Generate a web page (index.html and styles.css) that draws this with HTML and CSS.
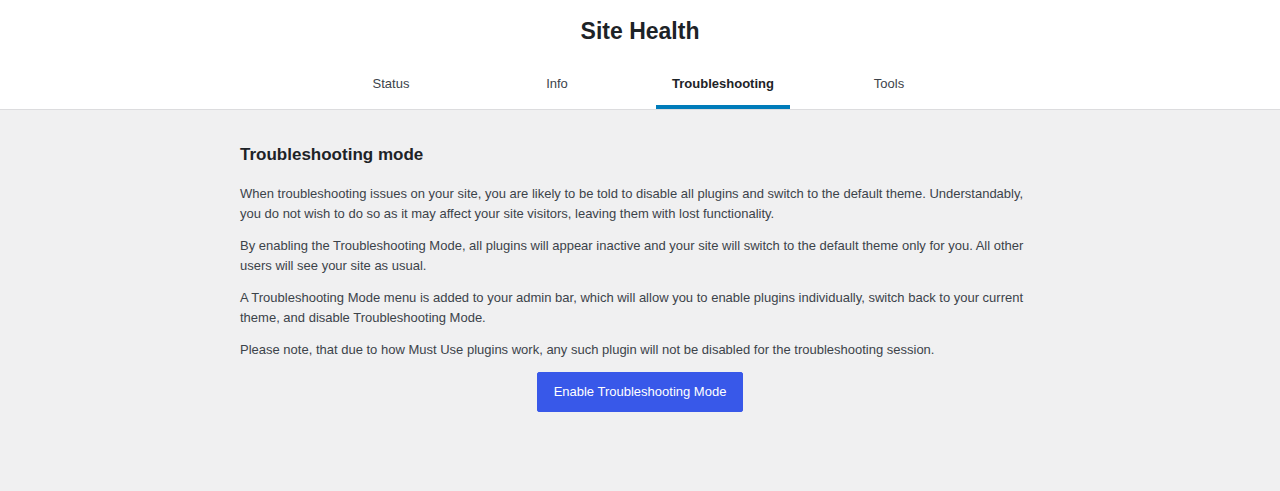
FILE: index.html
```html
<!DOCTYPE html>
<html lang="en">
<head>
<meta charset="utf-8">
<title>Site Health</title>
<link rel="stylesheet" href="styles.css">
</head>
<body>
<header class="header">
  <div class="title-section">
    <h1 class="title">Site Health</h1>
  </div>
  <nav class="tabs">
    <a class="tab" href="#">Status</a>
    <a class="tab" href="#">Info</a>
    <a class="tab active" href="#">Troubleshooting</a>
    <a class="tab" href="#">Tools</a>
  </nav>
</header>
<main class="body">
  <h2 class="section-title">Troubleshooting mode</h2>
  <p>When troubleshooting issues on your site, you are likely to be told to disable all plugins and switch to the default theme. Understandably, you do not wish to do so as it may affect your site visitors, leaving them with lost functionality.</p>
  <p>By enabling the Troubleshooting Mode, all plugins will appear inactive and your site will switch to the default theme only for you. All other users will see your site as usual.</p>
  <p>A Troubleshooting Mode menu is added to your admin bar, which will allow you to enable plugins individually, switch back to your current theme, and disable Troubleshooting Mode.</p>
  <p>Please note, that due to how Must Use plugins work, any such plugin will not be disabled for the troubleshooting session.</p>
  <div class="actions">
    <button class="button-primary" type="button">Enable Troubleshooting Mode</button>
  </div>
</main>
</body>
</html>
```

FILE: styles.css
```css
html, body {
  margin: 0;
  padding: 0;
}
body {
  background: #f0f0f1;
  color: #3c434a;
  font-family: "Liberation Sans", Arial, sans-serif;
  font-size: 13px;
  line-height: 1.4em;
  min-height: 491px;
}
.header {
  background: #fff;
  border-bottom: 1px solid #dcdcde;
  text-align: center;
}
.title-section {
  display: flex;
  justify-content: center;
  padding-top: 16px;
}
.title {
  margin: 0;
  font-size: 23px;
  font-weight: 600;
  line-height: 30px;
  color: #1d2327;
  padding: 0;
}
.tabs {
  display: grid;
  grid-template-columns: repeat(4, 166px);
  justify-content: center;
  margin-top: 20px;
}
.tab {
  display: block;
  margin: 0 16px;
  padding: 0 8px;
  height: 39px;
  line-height: 36px;
  color: #3c434a;
  text-decoration: none;
  font-size: 13px;
  border-bottom: 4px solid transparent;
  box-sizing: content-box;
}
.tab.active {
  font-weight: 600;
  color: #1d2327;
  border-bottom-color: #007cba;
}
.body {
  max-width: 800px;
  margin: 0 auto;
  padding: 34px 0 0;
}
.section-title {
  font-size: 17px;
  font-weight: 600;
  color: #1d2327;
  margin: 0 0 18px;
  line-height: 1.3;
}
.body p {
  margin: 13px 0;
  line-height: 19.5px;
  font-size: 13px;
}
.body p:last-of-type {
  margin-bottom: 0;
}
.actions {
  display: flex;
  justify-content: center;
  margin-top: 12px;
}
.button-primary {
  background: #3858e9;
  border: 1px solid #3858e9;
  border-radius: 2px;
  color: #fff;
  font-family: "Liberation Sans", Arial, sans-serif;
  font-size: 13px;
  height: 40px;
  padding: 0 16px;
  cursor: pointer;
}
```
